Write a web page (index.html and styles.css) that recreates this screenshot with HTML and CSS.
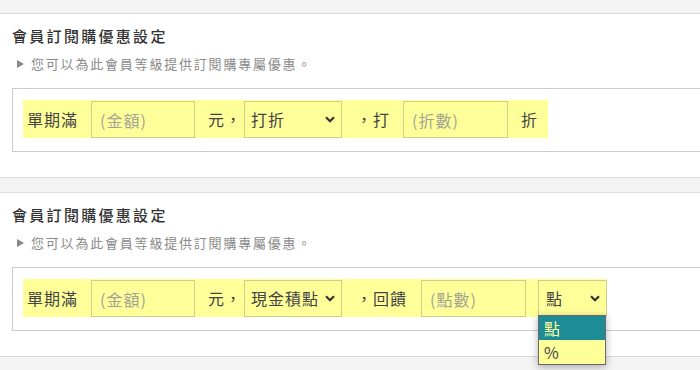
FILE: index.html
```html
<!DOCTYPE html>
<html lang="zh-Hant">
<head>
<meta charset="utf-8">
<title>會員訂閱購優惠設定</title>
<link rel="stylesheet" href="styles.css">
</head>
<body>
<div class="page">
  <section class="card">
    <h2 class="title">會員訂閱購優惠設定</h2>
    <p class="sub"><span class="tri"></span>您可以為此會員等級提供訂閱購專屬優惠。</p>
    <div class="box">
      <div class="row">
        <span class="txt lead">單期滿</span>
        <input class="field f104" type="text" placeholder="(金額)">
        <span class="txt m13">元，</span>
        <div class="select s98"><span class="sel-text">打折</span><svg class="chev" viewBox="0 0 10 7" width="10" height="7"><path d="M1 1.3 L5 5.3 L9 1.3" fill="none" stroke="#333" stroke-width="2.2"/></svg></div>
        <span class="txt m14">，打</span>
        <input class="field f105 m13" type="text" placeholder="(折數)">
        <span class="txt m13 tail">折</span>
      </div>
    </div>
  </section>

  <section class="card">
    <h2 class="title">會員訂閱購優惠設定</h2>
    <p class="sub"><span class="tri"></span>您可以為此會員等級提供訂閱購專屬優惠。</p>
    <div class="box">
      <div class="row">
        <span class="txt lead">單期滿</span>
        <input class="field f104" type="text" placeholder="(金額)">
        <span class="txt m13">元，</span>
        <div class="select s98"><span class="sel-text">現金積點</span><svg class="chev" viewBox="0 0 10 7" width="10" height="7"><path d="M1 1.3 L5 5.3 L9 1.3" fill="none" stroke="#333" stroke-width="2.2"/></svg></div>
        <span class="txt m14">，回饋</span>
        <input class="field f105 m14" type="text" placeholder="(點數)">
        <div class="select s69 m12 open"><span class="sel-text">點</span><svg class="chev" viewBox="0 0 10 7" width="10" height="7"><path d="M1 1.3 L5 5.3 L9 1.3" fill="none" stroke="#333" stroke-width="2.2"/></svg>
          <ul class="popup">
            <li class="opt active">點</li>
            <li class="opt">%</li>
          </ul>
        </div>
      </div>
    </div>
  </section>
</div>
</body>
</html>
```

FILE: styles.css
```css
body {
  margin: 0;
  padding: 0;
  min-height: 370px;
  background: #f3f3f3;
  font-family: "Noto Sans CJK TC", "Noto Sans", sans-serif;
  color: #444;
}

.page {
  display: flex;
  flex-direction: column;
  gap: 14px;
  padding-top: 13px;
}

.card {
  background: #fff;
  border-top: 1px solid #dcdcdc;
  border-bottom: 1px solid #dcdcdc;
  padding: 11px 0 25px 12px;
}

.title {
  margin: 0;
  font-size: 15px;
  line-height: 22px;
  font-weight: 500;
  letter-spacing: 2.3px;
  color: #333;
}

.sub {
  margin: 8px 0 0;
  font-size: 13px;
  line-height: 18px;
  letter-spacing: 1.8px;
  color: #8a8a8a;
  display: flex;
  align-items: center;
}

.tri {
  display: inline-block;
  width: 0;
  height: 0;
  border-left: 7px solid #888;
  border-top: 4px solid transparent;
  border-bottom: 4px solid transparent;
  margin-left: 5px;
  margin-right: 7px;
}

.box {
  margin-top: 15px;
  border: 1px solid #ccc;
  border-right: none;
  padding: 11px 10px 13px;
}

.row {
  display: inline-flex;
  align-items: center;
  box-sizing: border-box;
  height: 38px;
  padding: 1px 0 0 4px;
  background: #ffff9a;
  font-size: 16px;
  letter-spacing: 1px;
}

.txt {
  line-height: 37px;
  color: #444;
  white-space: nowrap;
}

.m12 { margin-left: 12px; }
.m13 { margin-left: 13px; }
.m14 { margin-left: 14px; }
.tail { padding-right: 10px; }

.field {
  box-sizing: border-box;
  height: 37px;
  margin-left: 13px;
  border: 1px solid #d3cd8c;
  background: transparent;
  padding: 0 0 0 8px;
  font-family: inherit;
  font-size: 16px;
  letter-spacing: 1px;
  color: #444;
  outline: none;
}

.field.m13 { margin-left: 13px; }
.field.m14 { margin-left: 14px; }

.field::placeholder {
  color: #a3a394;
}

.f104 { width: 104px; }
.f105 { width: 105px; }

.select {
  position: relative;
  box-sizing: border-box;
  height: 37px;
  margin-left: 2px;
  border: 1px solid #d3cd8c;
  display: flex;
  align-items: center;
  justify-content: space-between;
  padding: 0 6px 0 6px;
}

.select.m12 { margin-left: 12px; }
.s98 { width: 98px; }
.s69 { width: 69px; padding-left: 7px; }

.sel-text {
  line-height: 35px;
  white-space: nowrap;
  color: #444;
}

.chev {
  flex: none;
  display: block;
}

.popup {
  position: absolute;
  top: calc(100% - 1px);
  left: -1px;
  width: 68px;
  box-sizing: border-box;
  margin: 0;
  padding: 0;
  list-style: none;
  border: 1px solid #6a6a6a;
  background: #ffff9a;
  box-shadow: 0 2px 8px rgba(0, 0, 0, 0.3);
  z-index: 5;
}

.opt {
  height: 24px;
  line-height: 24px;
  padding-left: 5px;
  font-size: 16px;
  color: #444;
}

.opt.active {
  background: #1e8c96;
  color: #ffff9a;
}
```
